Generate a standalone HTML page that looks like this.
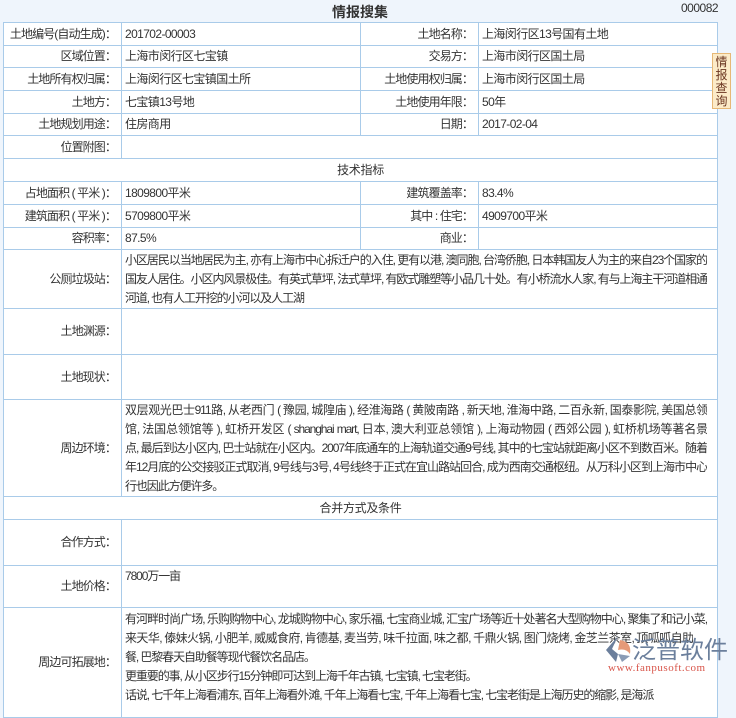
<!DOCTYPE html>
<html><head><meta charset="utf-8"><style>
body{margin:0;background:#eff5fc;font-family:"Liberation Sans","Noto Sans CJK SC",sans-serif;font-size:12px;color:#333;width:736px;height:679px;overflow:hidden;position:relative;letter-spacing:-0.95px}
.title{position:absolute;left:0;width:720px;top:2px;text-align:center;font-size:14px;font-weight:bold;color:#333;letter-spacing:0}
.no{position:absolute;left:681px;top:1px;font-size:12px;color:#333;letter-spacing:-0.5px}
table{position:absolute;left:3px;top:22px;width:714px;border-collapse:collapse;table-layout:fixed}
td{border:1px solid #a9cbe9;background:#fff;padding:0;line-height:19px}
td.l{text-align:right;padding-right:5px;vertical-align:middle;white-space:nowrap;letter-spacing:-0.9px}
td.v{padding-left:3px;vertical-align:middle;white-space:nowrap;letter-spacing:-0.6px}
td.t{padding:1px 4px 0 3px;vertical-align:top;white-space:nowrap;overflow:hidden;letter-spacing:-1.1px}
td.t div{width:582px;white-space:nowrap}
td.t div.j{text-align:justify;text-align-last:justify;white-space:normal;height:19px;overflow:hidden}
td.c{text-align:center;letter-spacing:-0.3px}
.tab{position:absolute;left:712px;top:53px;width:19px;height:56px;background:#fcebc8;border:1px solid #e6b876;color:#6a3520;font-size:12px;line-height:13px;text-align:center;padding-top:2px;box-sizing:border-box;letter-spacing:0}
.logo{position:absolute;left:602px;top:632px;width:134px;height:47px}
.lt{position:absolute;left:30px;top:-2px;font-size:24px;color:#6b7f9c;letter-spacing:0;white-space:nowrap}
.lu{position:absolute;left:6px;top:30px;font-size:11px;color:#d8554a;font-family:"Liberation Serif",serif;white-space:nowrap;letter-spacing:0.5px}
</style></head><body>
<div class="title">情报搜集</div>
<div class="no">000082</div>
<table>
<colgroup><col style="width:118px"><col style="width:239px"><col style="width:118px"><col style="width:239px"></colgroup>
<tr style="height:23px"><td class="l">土地编号(自动生成)：</td><td class="v">201702-00003</td><td class="l">土地名称：</td><td class="v">上海闵行区13号国有土地</td></tr>
<tr style="height:22px"><td class="l">区域位置：</td><td class="v">上海市闵行区七宝镇</td><td class="l">交易方：</td><td class="v">上海市闵行区国土局</td></tr>
<tr style="height:23px"><td class="l">土地所有权归属：</td><td class="v">上海闵行区七宝镇国土所</td><td class="l">土地使用权归属：</td><td class="v">上海市闵行区国土局</td></tr>
<tr style="height:23px"><td class="l">土地方：</td><td class="v">七宝镇13号地</td><td class="l">土地使用年限：</td><td class="v">50年</td></tr>
<tr style="height:22px"><td class="l">土地规划用途：</td><td class="v">住房商用</td><td class="l">日期：</td><td class="v">2017-02-04</td></tr>
<tr style="height:23px"><td class="l">位置附图：</td><td class="v" colspan="3"></td></tr>
<tr style="height:23px"><td class="c" colspan="4">技术指标</td></tr>
<tr style="height:23px"><td class="l">占地面积 ( 平米 )：</td><td class="v">1809800平米</td><td class="l">建筑覆盖率：</td><td class="v">83.4%</td></tr>
<tr style="height:23px"><td class="l">建筑面积 ( 平米 )：</td><td class="v">5709800平米</td><td class="l">其中 : 住宅：</td><td class="v">4909700平米</td></tr>
<tr style="height:22px"><td class="l">容积率：</td><td class="v">87.5%</td><td class="l">商业：</td><td class="v"></td></tr>
<tr style="height:57px"><td class="l">公厕垃圾站：</td><td class="t" colspan="3"><div class="j">小区居民以当地居民为主, 亦有上海市中心拆迁户的入住, 更有以港, 澳同胞, 台湾侨胞, 日本韩国友人为主的来自23个国家的外</div><div class="j">国友人居住。小区内风景极佳。有英式草坪, 法式草坪, 有欧式雕塑等小品几十处。有小桥流水人家, 有与上海主干河道相通的大</div><div>河道, 也有人工开挖的小河以及人工湖</div></td></tr>
<tr style="height:46px"><td class="l">土地渊源：</td><td class="t" colspan="3"></td></tr>
<tr style="height:45px"><td class="l">土地现状：</td><td class="t" colspan="3"></td></tr>
<tr style="height:90px"><td class="l">周边环境：</td><td class="t" colspan="3"><div class="j">双层观光巴士911路, 从老西门 ( 豫园, 城隍庙 ), 经淮海路 ( 黄陂南路 , 新天地, 淮海中路, 二百永新, 国泰影院, 美国总领</div><div class="j">馆, 法国总领馆等 ), 虹桥开发区 ( shanghai mart, 日本, 澳大利亚总领馆 ), 上海动物园 ( 西郊公园 ), 虹桥机场等著名景</div><div class="j">点, 最后到达小区内, 巴士站就在小区内。2007年底通车的上海轨道交通9号线, 其中的七宝站就距离小区不到数百米。随着 2008</div><div class="j">年12月底的公交接驳正式取消, 9号线与3号, 4号线终于正式在宜山路站回合, 成为西南交通枢纽。从万科小区到上海市中心的出</div><div>行也因此方便许多。</div></td></tr>
<tr style="height:23px"><td class="c" colspan="4">合并方式及条件</td></tr>
<tr style="height:46px"><td class="l">合作方式：</td><td class="t" colspan="3"></td></tr>
<tr style="height:42px"><td class="l">土地价格：</td><td class="t" colspan="3">7800万一亩</td></tr>
<tr style="height:110px"><td class="l">周边可拓展地：</td><td class="t" colspan="3" style="padding-top:2px"><div class="j">有河畔时尚广场, 乐购购物中心, 龙城购物中心, 家乐福, 七宝商业城, 汇宝广场等近十处著名大型购物中心, 聚集了和记小菜,</div><div class="j" style="width:568px">来天华, 傣妹火锅, 小肥羊, 威威食府, 肯德基, 麦当劳, 味千拉面, 味之都, 千鼎火锅, 图门烧烤, 金芝兰茶室, 顶呱呱自助</div><div>餐, 巴黎春天自助餐等现代餐饮名品店。</div><div>更重要的事, 从小区步行15分钟即可达到上海千年古镇, 七宝镇, 七宝老街。</div><div>话说, 七千年上海看浦东, 百年上海看外滩, 千年上海看七宝, 千年上海看七宝, 七宝老街是上海历史的缩影, 是海派</div></td></tr>
</table>
<div class="tab">情<br>报<br>查<br>询</div>
<div class="logo">
<svg width="30" height="30" style="position:absolute;left:2px;top:2px" viewBox="0 0 30 30"><path d="M14 2 L2 16 L12 28 L14 20 L8 15 Z" fill="#6b7f9c"/><path d="M16 6 Q28 8 26 20 Q22 14 14 16 Z" fill="#e59a78"/><path d="M14 20 L26 22 L18 28 Z" fill="#8a9bb4"/></svg>
<div class="lt">泛普软件</div>
<div class="lu">www.fanpusoft.com</div>
</div>
</body></html>
